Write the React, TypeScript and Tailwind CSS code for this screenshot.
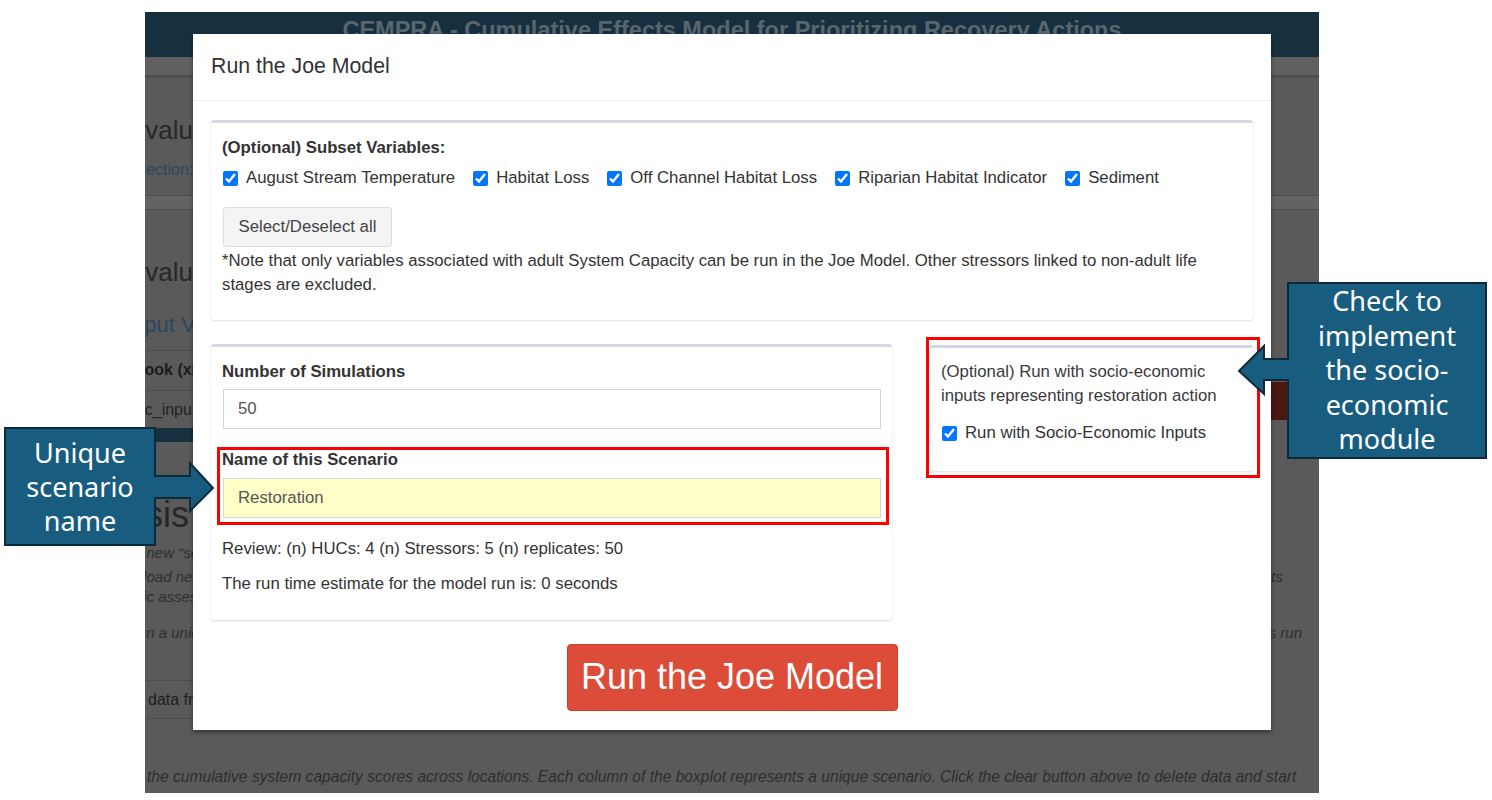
import type { ReactNode } from 'react';

const variables = [
  'August Stream Temperature',
  'Habitat Loss',
  'Off Channel Habitat Loss',
  'Riparian Habitat Indicator',
  'Sediment',
];

function Check() {
  return (
    <input
      type="checkbox"
      defaultChecked
      className="m-0 h-[15px] w-[15px] shrink-0 accent-[#0075ff]"
    />
  );
}

function Box({ className, children }: { className?: string; children: ReactNode }) {
  return (
    <div
      className={`rounded-[3px] border-t-[3px] border-[#d2d6de] bg-white shadow-[0_1px_2px_rgba(0,0,0,0.14)] ${className ?? ''}`}
    >
      {children}
    </div>
  );
}

function Backdrop() {
  return (
    <div className="relative ml-[145px] mt-[12px] h-[781px] w-[1174px] overflow-hidden bg-[#5a5a5a]">
      {/* app header, dimmed */}
      <div className="flex h-[45px] justify-center bg-[#17303f] pt-[5px]">
        <span className="whitespace-nowrap text-[23.5px] font-bold leading-[27px] text-[#58666f]">
          CEMPRA - Cumulative Effects Model for Prioritizing Recovery Actions
        </span>
      </div>
      <div className="h-[21px] border-b-[3px] border-[#4e4e4e] bg-[#606060]" />

      <div className="-ml-[17px] mt-[36px] whitespace-nowrap text-[26px] leading-[32px] text-[#272727]">
        Evaluate Model Inputs
      </div>
      <div className="-ml-[22px] mt-[14px] whitespace-nowrap text-[16px] leading-[20px] text-[#2b475c]">
        Selection: all
      </div>
      <div className="mt-[15px] h-[15px] border-y border-[#4d4d4d] bg-[#636363]" />
      <div className="-ml-[17px] mt-[46px] whitespace-nowrap text-[26px] leading-[32px] text-[#272727]">
        Evaluate Stressor Inputs
      </div>
      <div className="-ml-[19px] mt-[24px] whitespace-nowrap text-[22px] leading-[26px] text-[#2b475c]">
        Input Variables
      </div>

      <div className="mt-[12px] flex h-[78px] justify-between">
        <div className="w-[500px]">
          <div className="border-t border-[#4d4d4d] pt-[9px]">
            <div className="-ml-[50px] whitespace-nowrap text-[16px] font-bold leading-[20px] text-[#1b1b1b]">
              Workbook (xlsx)
            </div>
          </div>
          <div className="mt-[10px] border-t border-[#4d4d4d] pt-[9px]">
            <div className="-ml-[107px] whitespace-nowrap text-[16px] leading-[20px] text-[#232323]">
              socio_economic_inputs.xlsx
            </div>
          </div>
        </div>
        <div className="mr-[29px] mt-[32px] h-[38px] w-[19px] bg-[#4a1711]" />
      </div>
      <div className="h-[14px] w-[500px] bg-[#17303f]" />

      <div className="-ml-[90px] mt-[53px] whitespace-nowrap text-[36px] leading-[40px] text-[#272727]">
        Analysis
      </div>

      <div className="mt-[8px] text-[15px] italic leading-[20px] text-[#2e2e2e]">
        <div className="-ml-[11px] whitespace-nowrap">a new “scenario” for each model run</div>
        <div className="mt-[4px] flex justify-between">
          <span className="-ml-[21px] whitespace-nowrap">Upload new stressor inputs</span>
          <span className="mr-[36px] whitespace-nowrap">inputs</span>
        </div>
        <div className="-ml-[41px] whitespace-nowrap">specific assessment of each scenario</div>
        <div className="mt-[16px] flex justify-between">
          <span className="-ml-[18px] whitespace-nowrap">Run a unique scenario name</span>
          <span className="mr-[17px] whitespace-nowrap">is run</span>
        </div>
      </div>

      <div className="mt-[37px] flex h-[39px] w-[500px] items-center border-y border-[#4d4d4d] pl-[3px] text-[16px] text-[#1e1e1e]">
        data from file
      </div>

      <div className="ml-[2px] mt-[48px] whitespace-nowrap text-[15.6px] italic leading-[20px] text-[#2e2e2e]">
        the cumulative system capacity scores across locations. Each column of the boxplot represents a unique scenario. Click the clear button above to delete data and start
      </div>

      <Modal />
    </div>
  );
}

function Modal() {
  return (
    <div className="absolute left-[48px] top-[22px] h-[696px] w-[1078px] bg-white text-[16.75px] text-[#333] shadow-[0_2px_4px_rgba(0,0,0,0.45)]">
      <div className="flex h-[67px] items-center border-b border-[#efefef] px-[18px] pb-[2px]">
        <h4 className="text-[21.3px] leading-[24px] text-[#333]">Run the Joe Model</h4>
      </div>

      <div className="px-[18px] pt-[19px]">
        <Box className="px-[11px] pb-[23px] pt-[13px]">
          <div className="font-bold leading-[24px]">(Optional) Subset Variables:</div>
          <div className="mt-[6px] flex h-[24px] items-center gap-[18px] pl-[1px]">
            {variables.map(v => (
              <label key={v} className="flex items-center gap-[8px] whitespace-nowrap">
                <Check />
                <span>{v}</span>
              </label>
            ))}
          </div>
          <button className="ml-[1px] mt-[17px] flex h-[40px] w-[169px] items-center justify-center rounded-[3px] border border-[#ddd] bg-[#f4f4f4] text-[#444]">
            Select/Deselect all
          </button>
          <p className="mt-[2px] leading-[24px]">
            *Note that only variables associated with adult System Capacity can be run in the Joe Model. Other stressors linked to non-adult life
            <br />
            stages are excluded.
          </p>
        </Box>

        <div className="mt-[24px] flex items-start">
          <Box className="w-[681px] px-[11px] pb-[24px] pt-[13px]">
            <div className="font-bold leading-[24px]">Number of Simulations</div>
            <input
              readOnly
              value="50"
              className="mt-[5px] ml-[1px] h-[40px] w-[658px] border border-[#d2d6de] bg-white px-[14px] text-[#555] outline-none"
            />
            <div className="mt-[19px] font-bold leading-[24px]">Name of this Scenario</div>
            <input
              readOnly
              value="Restoration"
              className="mt-[6px] ml-[1px] h-[40px] w-[658px] border border-[#d2d6de] bg-[#ffffc8] px-[14px] text-[#555] outline-none"
            />
            <div className="mt-[19px] leading-[24px]">Review: (n) HUCs: 4 (n) Stressors: 5 (n) replicates: 50</div>
            <div className="mt-[11px] leading-[24px]">The run time estimate for the model run is: 0 seconds</div>
          </Box>

          <Box className="ml-[38px] mt-[1px] w-[325px] px-[11px] pb-[26px] pt-[12px]">
            <p className="leading-[24px] text-[#3a3a3a]">
              (Optional) Run with socio-economic
              <br />
              inputs representing restoration action
            </p>
            <label className="mt-[13px] flex h-[24px] items-center gap-[8px] whitespace-nowrap pl-[1px]">
              <Check />
              <span>Run with Socio-Economic Inputs</span>
            </label>
          </Box>
        </div>

        <div className="mt-[24px] flex justify-center">
          <button className="flex h-[67px] w-[331px] items-center justify-center rounded-[4px] border border-[#d73925] bg-[#dd4b39] pb-[2px] text-[36px] text-white">
            Run the Joe Model
          </button>
        </div>
      </div>
    </div>
  );
}

export default function App() {
  return (
    <div className="relative h-[800px] w-[1492px] overflow-hidden bg-white font-['Liberation_Sans',Arial,sans-serif]">
      <Backdrop />

      {/* annotation frames */}
      <div className="absolute left-[217px] top-[447px] h-[78px] w-[672px] border-[3px] border-[#ff0000]" />
      <div className="absolute left-[926px] top-[337px] h-[141px] w-[334px] border-[3px] border-[#ff0000]" />

      {/* left callout */}
      <svg className="absolute left-[4px] top-[427px]" width="212" height="120" viewBox="0 0 212 120">
        <polygon
          points="1,1 151,1 151,49 186,49 186,36 209,61 186,84 186,71 151,71 151,118 1,118"
          fill="#185d80"
          stroke="#0d2a3a"
          strokeWidth="2"
        />
      </svg>
      <div className="absolute left-[5px] top-[428px] flex h-[117px] w-[150px] flex-col items-center justify-center font-['Noto_Sans',sans-serif] text-[27px] leading-[34px] text-white">
        <span>Unique</span>
        <span>scenario</span>
        <span>name</span>
      </div>

      {/* right callout */}
      <svg className="absolute left-[1237px] top-[282px]" width="252" height="178" viewBox="0 0 252 178">
        <polygon
          points="51,1 249,1 249,176 51,176 51,98 27,98 27,112 2,89 27,64 27,77 51,77"
          fill="#185d80"
          stroke="#0d2a3a"
          strokeWidth="2"
        />
      </svg>
      <div className="absolute left-[1288px] top-[283px] flex h-[175px] w-[198px] flex-col items-center justify-center font-['Noto_Sans',sans-serif] text-[27px] leading-[34.5px] text-white">
        <span>Check to</span>
        <span>implement</span>
        <span>the socio-</span>
        <span>economic</span>
        <span>module</span>
      </div>
    </div>
  );
}
